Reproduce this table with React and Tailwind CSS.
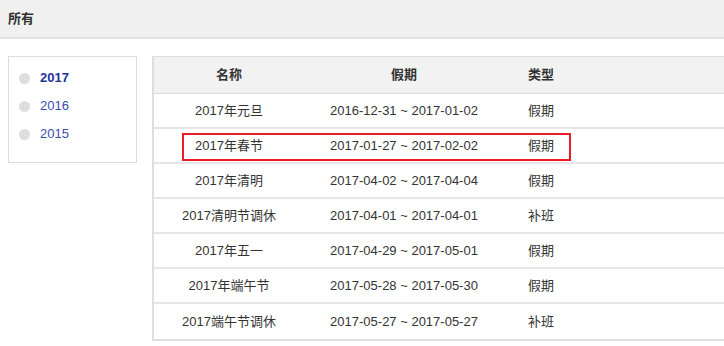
import React from "react";

const YEARS = [
  { year: "2017", active: true },
  { year: "2016", active: false },
  { year: "2015", active: false },
];

const HOLIDAYS = [
  { name: "2017年元旦", range: "2016-12-31 ~ 2017-01-02", type: "假期" },
  { name: "2017年春节", range: "2017-01-27 ~ 2017-02-02", type: "假期", marked: true },
  { name: "2017年清明", range: "2017-04-02 ~ 2017-04-04", type: "假期" },
  { name: "2017清明节调休", range: "2017-04-01 ~ 2017-04-01", type: "补班" },
  { name: "2017年五一", range: "2017-04-29 ~ 2017-05-01", type: "假期" },
  { name: "2017年端午节", range: "2017-05-28 ~ 2017-05-30", type: "假期" },
  { name: "2017端午节调休", range: "2017-05-27 ~ 2017-05-27", type: "补班" },
];

const App = () => {
  return (
    <div
      className="w-[724px] h-[346px] overflow-hidden bg-white text-[13px] text-[#333]"
      style={{ fontFamily: '"Liberation Sans", Arial, "Noto Sans CJK SC", sans-serif' }}
    >
      <div className="h-[39px] bg-[#f0f0f0] border-b-2 border-[#e2e2e2] flex items-center px-2">
        <span className="font-bold text-[13px] text-[#333]">所有</span>
      </div>

      <div className="flex items-start pt-[17px] pl-2 gap-[15px]">
        <div className="w-[129px] h-[107px] border border-[#dcdcdc] pt-[7px] pl-[10px]">
          {YEARS.map((y) => (
            <div key={y.year} className="flex items-center h-[28px] gap-[10px]">
              <span className="w-[11px] h-[11px] rounded-full bg-[#dedede]"></span>
              <span
                className={
                  y.active ? "font-bold text-[#23329a]" : "text-[#3b4db0]"
                }
              >
                {y.year}
              </span>
            </div>
          ))}
        </div>

        <div className="relative flex-1 border-l-2 border-t border-b-2 border-[#dedede]">
          <div className="flex h-[37px] bg-[#f2f2f2] border-b border-[#dcdcdc] font-bold items-center">
            <div className="w-[150px] text-center">名称</div>
            <div className="w-[200px] text-center">假期</div>
            <div className="pl-[24px]">类型</div>
          </div>
          {HOLIDAYS.map((h, i) => (
            <div
              key={h.name}
              className={`flex items-center h-[35px] ${
                i < HOLIDAYS.length - 1 ? "border-b-2 border-[#e6e6e6]" : ""
              }`}
            >
              <div className="w-[150px] text-center">{h.name}</div>
              <div className="w-[200px] text-center">{h.range}</div>
              <div className="pl-[24px]">{h.type}</div>
            </div>
          ))}
          <div className="absolute left-[28px] top-[76px] w-[389px] h-[28px] border-2 border-[#ec1c24] pointer-events-none"></div>
        </div>
      </div>
    </div>
  );
};

export default App;
